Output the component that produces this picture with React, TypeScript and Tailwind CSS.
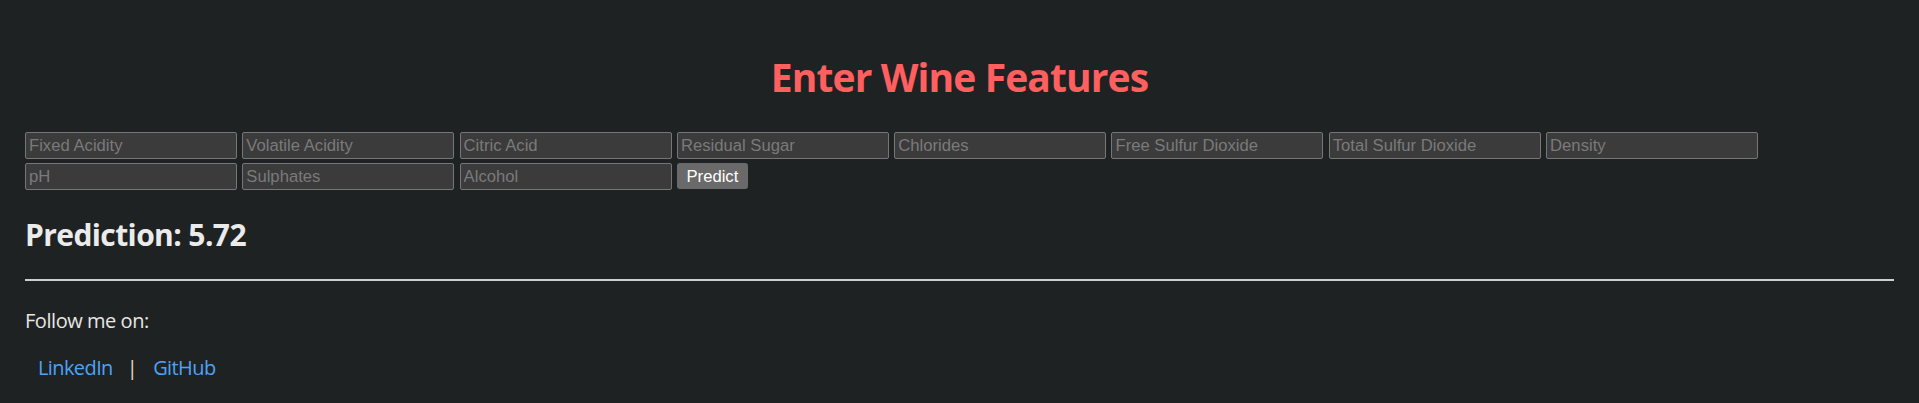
import React from 'react';

const features = [
  'Fixed Acidity',
  'Volatile Acidity',
  'Citric Acid',
  'Residual Sugar',
  'Chlorides',
  'Free Sulfur Dioxide',
  'Total Sulfur Dioxide',
  'Density',
  'pH',
  'Sulphates',
  'Alcohol',
];

const sans = '[font-family:"Open_Sans","Noto_Sans",sans-serif]';

export default function App() {
  return (
    <div className={`min-h-screen bg-[#1f2223] text-[#e8e6e3] ${sans}`}>
      <div className="px-[25px] pt-[54px] pb-6">
        {/* Title */}
        <h1 className="text-center text-[39px] leading-[46px] tracking-[-0.9px] font-bold text-[#ff5f5f]">
          Enter Wine Features
        </h1>

        {/* Feature form */}
        <form className="mt-[32px] flex flex-wrap gap-x-[5.3px] gap-y-[4px]">
          {features.map((f) => (
            <input
              key={f}
              type="text"
              placeholder={f}
              className="w-[212px] h-[27px] px-[3px] bg-[#3b3b3b] border border-[#767676] rounded-[2px] text-[16.67px] text-[#ddd] placeholder:text-[#7a7a7a] [font-family:'Liberation_Sans',Arial,sans-serif] outline-none"
            />
          ))}
          <button
            type="button"
            className="w-[71px] h-[26px] bg-[#6a6a6a] rounded-[3px] text-white text-[16.67px] [font-family:'Liberation_Sans',Arial,sans-serif]"
          >
            Predict
          </button>
        </form>

        {/* Result */}
        <h2 className="mt-[27px] text-[30px] leading-[36px] tracking-[-0.6px] font-bold text-[#ebebeb]">
          Prediction: 5.72
        </h2>

        <div className="mt-[26px] h-[2px] bg-[#cfcfcf]" />

        {/* Footer */}
        <p className="mt-[26px] text-[20px] leading-[28px] tracking-[-0.45px]">Follow me on:</p>
        <div className="mt-[19px] flex items-center pl-[13px] text-[20px] leading-[28px] tracking-[-0.6px]">
          <a href="#" className="text-[#4da3f5]">LinkedIn</a>
          <span className="ml-[14px] mr-[16px] text-[#e8dcc0]">|</span>
          <a href="#" className="text-[#4da3f5]">GitHub</a>
        </div>
      </div>
    </div>
  );
}
